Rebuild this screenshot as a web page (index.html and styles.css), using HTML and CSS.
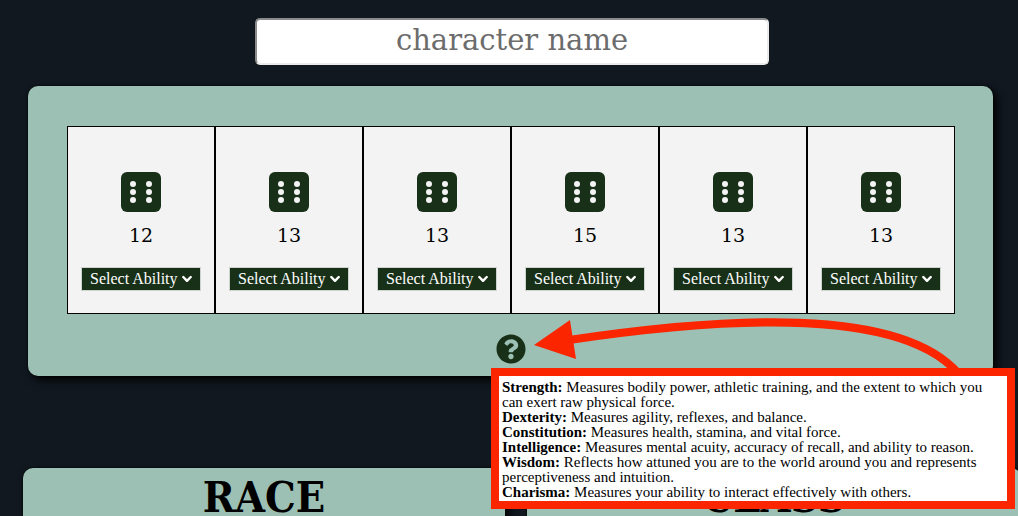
FILE: index.html
```html
<!DOCTYPE html>
<html lang="en">
<head>
<meta charset="utf-8">
<meta name="viewport" content="width=device-width, initial-scale=1">
<title>Character builder</title>
<link rel="stylesheet" href="styles.css">
</head>
<body>
<svg class="sprite" aria-hidden="true">
  <symbol id="die" viewBox="0 0 40 40">
    <rect width="40" height="40" rx="6" fill="#183018"/>
    <g fill="#f3f3f3">
      <circle cx="12" cy="12" r="3"/><circle cx="28" cy="12" r="3"/>
      <circle cx="12" cy="20" r="3"/><circle cx="28" cy="20" r="3"/>
      <circle cx="12" cy="28" r="3"/><circle cx="28" cy="28" r="3"/>
    </g>
  </symbol>
  <symbol id="chevron" viewBox="0 0 10 8">
    <path d="M1.3 2 5 5.800 8.700 2" fill="none" stroke="#fff" stroke-width="2.400" stroke-linecap="round" stroke-linejoin="round"/>
  </symbol>
</svg>
<main class="page">
  <input class="name" type="text" placeholder="character name" aria-label="character name">
  <section class="abilities">
    <div class="rolls">
      <div class="roll"><svg class="die"><use href="#die"/></svg><span class="score">12</span><div class="pick"><select class="select" aria-label="Ability for roll 1"><option>Select Ability</option></select><svg class="chevron"><use href="#chevron"/></svg></div></div>
      <div class="roll"><svg class="die"><use href="#die"/></svg><span class="score">13</span><div class="pick"><select class="select" aria-label="Ability for roll 2"><option>Select Ability</option></select><svg class="chevron"><use href="#chevron"/></svg></div></div>
      <div class="roll"><svg class="die"><use href="#die"/></svg><span class="score">13</span><div class="pick"><select class="select" aria-label="Ability for roll 3"><option>Select Ability</option></select><svg class="chevron"><use href="#chevron"/></svg></div></div>
      <div class="roll"><svg class="die"><use href="#die"/></svg><span class="score">15</span><div class="pick"><select class="select" aria-label="Ability for roll 4"><option>Select Ability</option></select><svg class="chevron"><use href="#chevron"/></svg></div></div>
      <div class="roll"><svg class="die"><use href="#die"/></svg><span class="score">13</span><div class="pick"><select class="select" aria-label="Ability for roll 5"><option>Select Ability</option></select><svg class="chevron"><use href="#chevron"/></svg></div></div>
      <div class="roll"><svg class="die"><use href="#die"/></svg><span class="score">13</span><div class="pick"><select class="select" aria-label="Ability for roll 6"><option>Select Ability</option></select><svg class="chevron"><use href="#chevron"/></svg></div></div>
    </div>
    <div class="help">
      <button class="help-button" type="button" aria-label="About abilities" aria-describedby="ability-tip">
        <svg class="help-icon" viewBox="0 0 512 512"><path fill="#183018" d="M504 256c0 137-111 248-248 248S8 393 8 256 119 8 256 8s248 111 248 248zM262.700 90c-54.500 0-89.300 23-116.500 63.800-3.500 5.300-2.400 12.400 2.700 16.300l34.700 26.300c5.200 3.900 12.600 3 16.700-2.100 17.900-22.700 30.100-35.800 57.300-35.800 20.400 0 45.700 13.100 45.700 33 0 15-12.400 22.700-32.500 34C247.100 238.500 216 254.900 216 296v4c0 6.600 5.400 12 12 12h56c6.600 0 12-5.400 12-12v-1.300c0-28.500 83.200-29.600 83.200-106.700 0-58-60.200-102-116.500-102zM256 338c-25.400 0-46 20.600-46 46s20.600 46 46 46 46-20.600 46-46-20.600-46-46-46z"/></svg>
      </button>
      <svg class="arrow" viewBox="0 0 430 60" aria-hidden="true">
        <path d="M35 25C190 2 365-9 424 58" fill="none" stroke="#fb2500" stroke-width="8"/>
        <path d="M0 30 36 5 42 44z" fill="#fb2500"/>
      </svg>
      <div class="tip" id="ability-tip" role="tooltip">
        <p><b>Strength:</b> Measures bodily power, athletic training, and the extent to which you can exert raw physical force.</p>
        <p><b>Dexterity:</b> Measures agility, reflexes, and balance.</p>
        <p><b>Constitution:</b> Measures health, stamina, and vital force.</p>
        <p><b>Intelligence:</b> Measures mental acuity, accuracy of recall, and ability to reason.</p>
        <p><b>Wisdom:</b> Reflects how attuned you are to the world around you and represents perceptiveness and intuition.</p>
        <p><b>Charisma:</b> Measures your ability to interact effectively with others.</p>
      </div>
    </div>
  </section>
  <div class="choices">
    <section class="choice"><h2>RACE</h2></section>
    <section class="choice"><h2>CLASS</h2></section>
  </div>
</main>
</body>
</html>
```
FILE: styles.css
```css
* { box-sizing: border-box; }
html { background: #111820; }
body {
  margin: 0;
  min-height: 100vh;
  overflow-x: hidden;
  background: #111820;
  color: #000;
  font-family: "Liberation Serif", "Times New Roman", serif;
}
.sprite { position: absolute; width: 0; height: 0; }
.page { display: flex; flex-direction: column; padding-top: 18px; min-height: 100vh; }
.name {
  align-self: center;
  width: 514px;
  max-width: 90%;
  margin-left: 6px;
  padding: 3px 8px 5px;
  border: 2px solid;
  border-color: #8b8b8b #ebebeb #ebebeb #8b8b8b;
  border-radius: 5px;
  background: #fff;
  font: 29px/35px "DejaVu Serif", serif;
  text-align: center;
}
.name::placeholder { color: #6c6c6c; opacity: 1; }
.abilities {
  margin: 21px 25px 0 28px;
  padding: 40px 38px 12px 39px;
  border-radius: 10px;
  background: #9dc0b4;
  box-shadow: 0 0 2px #000, 4px 4px 10px #000;
}
.rolls { display: grid; grid-template-columns: repeat(6, 1fr); }
.roll {
  display: flex;
  flex-direction: column;
  align-items: center;
  padding: 45px 0 22px;
  border: 1px solid #000;
  background: #f3f3f3;
}
.die { width: 40px; height: 40px; }
.score { margin: 11px 0 20px; font: 19px/24px "DejaVu Serif", serif; }
.pick { position: relative; }
.select {
  display: block;
  appearance: none;
  height: 24px;
  margin: 0;
  padding: 0 21px 0 8px;
  border: 1px solid #cdd3cd;
  border-radius: 0;
  background: #183018;
  color: #fff;
  font: 16px/20px "Liberation Serif", "Times New Roman", serif;
}
.chevron { position: absolute; right: 9px; top: 8px; width: 10px; height: 8px; pointer-events: none; }
.help { position: relative; width: 30px; margin: 20px auto 0; }
.help-button { display: block; padding: 0; border: 0; background: none; }
.help-icon { display: block; width: 30px; height: 30px; }
.arrow { position: absolute; z-index: 2; left: 38px; top: -19px; width: 430px; height: 60px; }
.tip {
  position: absolute;
  z-index: 3;
  left: -5px;
  top: 34px;
  width: 524px;
  padding: 4px 3px 1px;
  border: 8px solid #fb2500;
  background: #fff;
  font-size: 15px;
  line-height: 15px;
}
.tip p { margin: 0; }
.choices {
  flex: 1;
  display: grid;
  grid-template-columns: 482fr 494fr;
  gap: 22px;
  margin: 92px -3px 0 23px;
}
.choice {
  padding-top: 10px;
  border-radius: 10px 10px 0 0;
  background: #9dc0b4;
  box-shadow: 0 0 2px #000, 4px 4px 10px #000;
}
h2 {
  margin: 0;
  text-align: center;
  font: bold 43px/38px "DejaVu Serif Condensed", "DejaVu Serif", serif;
}
```
